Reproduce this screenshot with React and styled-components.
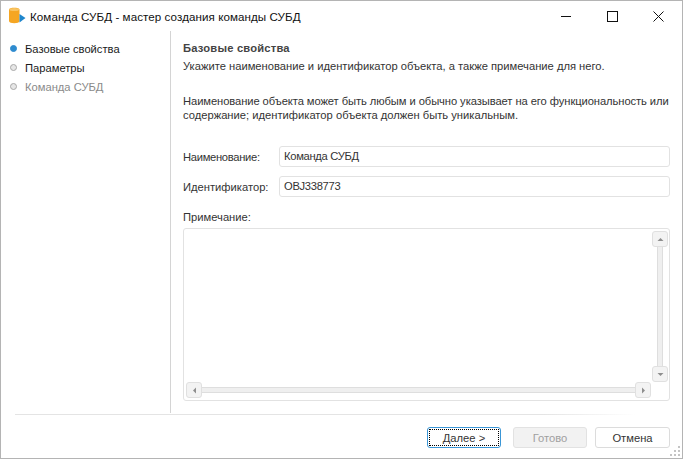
import React from "react";
import styled, { createGlobalStyle } from "styled-components";

const Global = createGlobalStyle`
  html, body { margin: 0; padding: 0; background: #fff; }
  body { font-family: "Liberation Sans", Arial, sans-serif; font-size: 11.2px; color: #1f1f1f; }
  #root { width: 683px; height: 459px; overflow: hidden; }
`;

const Win = styled.div`
  box-sizing: border-box; width: 683px; height: 459px; position: relative;
  display: flex; flex-direction: column; background: #fff;
  border: 1px solid #b4b4b4;
`;
const TitleBar = styled.div`
  height: 29px; display: flex; align-items: center; flex: none; padding-left: 8px;
`;
const TitleText = styled.div`
  font-size: 11.6px; color: #111; margin-left: 4px; padding-top: 1px; letter-spacing: 0.07px;
`;
const WinButtons = styled.div`
  margin-left: auto; display: flex; height: 29px; padding-top: 1px; padding-right: 1px;
`;
const WinBtn = styled.div`
  width: 46px; height: 29px; display: flex; align-items: center; justify-content: center;
`;
const Main = styled.div`
  flex: 1; display: flex; min-height: 0;
`;
const Side = styled.div`
  width: 170px; box-sizing: border-box; flex: none; border-right: 1px solid #d4d4d4;
  margin-top: 1px; padding-top: 8px; display: flex; flex-direction: column;
`;
const Step = styled.div`
  height: 19px; display: flex; align-items: center; padding-left: 9px; gap: 8px;
  color: ${p => (p.$muted ? "#8a8a8a" : "#1a1a1a")};
`;
const Dot = styled.span`
  width: 7px; height: 7px; border-radius: 50%; flex: none; box-sizing: border-box;
  background: ${p => (p.$active ? "#2e8bcf" : "#e6e6e6")};
  border: 1px solid ${p => (p.$active ? "#2e8bcf" : "#a8a8a8")};
`;
const Content = styled.div`
  flex: 1; min-width: 0; padding: 10px 12px 0 12px; display: flex; flex-direction: column; box-sizing: border-box;
`;
const Heading = styled.div`
  font-weight: 700; color: #444; line-height: 17px; height: 16px; letter-spacing: 0.2px;
`;
const Para = styled.div`
  color: #333; line-height: ${p => p.$lh || 15}px; margin-top: ${p => p.$mt}px; white-space: nowrap;
`;
const TightLine = styled.span`
  letter-spacing: -0.08px;
`;
const FormRow = styled.div`
  display: flex; align-items: center; height: 21px; margin-top: ${p => p.$mt}px;
`;
const FieldLabel = styled.label`
  width: 96px; flex: none; color: #333; letter-spacing: ${p => p.$ls || 0}px;
`;
const Input = styled.div`
  flex: 1; height: 21px; box-sizing: border-box; border: 1px solid #e2e2e2; border-radius: 3px;
  padding-left: 4px; line-height: 19px; color: #333; background: #fff; letter-spacing: -0.3px;
`;
const NoteLabel = styled.div`
  color: #333; line-height: 14px; margin-top: 13px;
`;
const NoteBox = styled.div`
  margin-top: 4px; height: 173px; box-sizing: border-box; border: 1px solid #e2e2e2; border-radius: 3px;
  padding: 2px 1px 2px 2px; display: grid; grid-template-columns: 1fr 16px; grid-template-rows: 1fr 16px;
  column-gap: 1px; background: #fff;
`;
const NoteArea = styled.div`
  grid-column: 1; grid-row: 1;
`;
const VBar = styled.div`
  grid-column: 2; grid-row: 1; display: flex; flex-direction: column; align-items: center;
`;
const HBar = styled.div`
  grid-column: 1; grid-row: 2; display: flex; align-items: center;
`;
const ScrollBtn = styled.div`
  width: 16px; height: 16px; box-sizing: border-box; flex: none; background: #f3f3f3;
  border: 1px solid #e0e0e0; border-radius: 3px; display: flex; align-items: center; justify-content: center;
`;
const VTrack = styled.div`
  flex: 1; width: 6px; box-sizing: border-box; background: #efefef; border: solid #dedede; border-width: 0 1px;
`;
const HTrack = styled.div`
  flex: 1; height: 6px; box-sizing: border-box; background: #efefef; border: solid #dedede; border-width: 1px 0;
`;
const Sep = styled.div`
  height: 1px; flex: none; margin: 1px 46px 0 14px; background: linear-gradient(to right, #e4e4e4 85%, #fff);
`;
const Footer = styled.div`
  flex: none; height: 43px; box-sizing: border-box; display: flex; justify-content: flex-end; align-items: flex-start;
  padding: 12px 12px 0 0; gap: 8px;
`;
const Btn = styled.div`
  width: ${p => p.$w}px; height: 21px; box-sizing: border-box; border-radius: 3px; position: relative;
  display: flex; align-items: center; justify-content: center; background: ${p => (p.$disabled ? "#f2f2f2" : "#fff")};
  color: ${p => (p.$disabled ? "#a0a0a0" : "#333")};
  border: 1px solid ${p => (p.$primary ? "#3a96d6" : p.$disabled ? "#e2e2e2" : "#dcdcdc")};
  margin-right: ${p => (p.$primary ? 4 : 0)}px;
`;
const Focus = styled.span`
  position: absolute; inset: 1px; border: 1px dotted #000;
`;
const Grip = styled.svg`
  position: absolute; right: 1px; bottom: 1px;
`;

const Tri = ({ r = 0, c = "#8e8e8e" }) => (
  <svg width="7" height="7" viewBox="0 0 7 7" style={{ transform: `rotate(${r}deg)` }}>
    <path d="M0.5 5 L3.5 2 L6.5 5 Z" fill={c} />
  </svg>
);

const Logo = () => (
  <svg width="17" height="17" viewBox="0 0 17 17">
    <path d="M0 2.5 C0 0 10.5 0 10.5 2.5 V14 C10.5 17 0 17 0 14 Z" fill="#f5a623" />
    <ellipse cx="5.25" cy="2.5" rx="4.8" ry="1.5" fill="#f8c463" />
    <path d="M10.5 7 L16.5 11 L10.5 15.5 Z" fill="#1f86cc" />
  </svg>
);

export default function App() {
  return (
    <>
      <Global />
      <Win>
        <TitleBar>
          <Logo />
          <TitleText>Команда СУБД - мастер создания команды СУБД</TitleText>
          <WinButtons>
            <WinBtn>
              <svg width="11" height="11"><path d="M0 5.5H10" stroke="#111" /></svg>
            </WinBtn>
            <WinBtn>
              <svg width="11" height="11"><rect x="0.5" y="0.5" width="10" height="10" fill="none" stroke="#111" /></svg>
            </WinBtn>
            <WinBtn>
              <svg width="11" height="11"><path d="M0.5 0.5L10.5 10.5M10.5 0.5L0.5 10.5" stroke="#111" /></svg>
            </WinBtn>
          </WinButtons>
        </TitleBar>
        <Main>
          <Side>
            <Step><Dot $active /><span>Базовые свойства</span></Step>
            <Step><Dot /><span>Параметры</span></Step>
            <Step $muted><Dot /><span>Команда СУБД</span></Step>
          </Side>
          <Content>
            <Heading>Базовые свойства</Heading>
            <Para $mt={3}>Укажите наименование и идентификатор объекта, а также примечание для него.</Para>
            <Para $mt={20} $lh={14}><TightLine>Наименование объекта может быть любым и обычно указывает на его функциональность или</TightLine><br />содержание; идентификатор объекта должен быть уникальным.</Para>
            <FormRow $mt={24}>
              <FieldLabel $ls={-0.3}>Наименование:</FieldLabel>
              <Input>Команда СУБД</Input>
            </FormRow>
            <FormRow $mt={9}>
              <FieldLabel>Идентификатор:</FieldLabel>
              <Input>OBJ338773</Input>
            </FormRow>
            <NoteLabel>Примечание:</NoteLabel>
            <NoteBox>
              <NoteArea />
              <VBar>
                <ScrollBtn><Tri /></ScrollBtn>
                <VTrack />
                <ScrollBtn><Tri r={180} /></ScrollBtn>
              </VBar>
              <HBar>
                <ScrollBtn><Tri r={-90} /></ScrollBtn>
                <HTrack />
                <ScrollBtn><Tri r={90} /></ScrollBtn>
              </HBar>
            </NoteBox>
          </Content>
        </Main>
        <Sep />
        <Footer>
          <Btn $w={74} $primary><Focus />Далее &gt;</Btn>
          <Btn $w={74} $disabled>Готово</Btn>
          <Btn $w={75}>Отмена</Btn>
        </Footer>
        <Grip width="11" height="11" viewBox="0 0 11 11">
          <g fill="#c4c4c4">
            <rect x="8" y="0" width="2" height="2" />
            <rect x="4" y="4" width="2" height="2" /><rect x="8" y="4" width="2" height="2" />
            <rect x="0" y="8" width="2" height="2" /><rect x="4" y="8" width="2" height="2" /><rect x="8" y="8" width="2" height="2" />
          </g>
        </Grip>
      </Win>
    </>
  );
}
